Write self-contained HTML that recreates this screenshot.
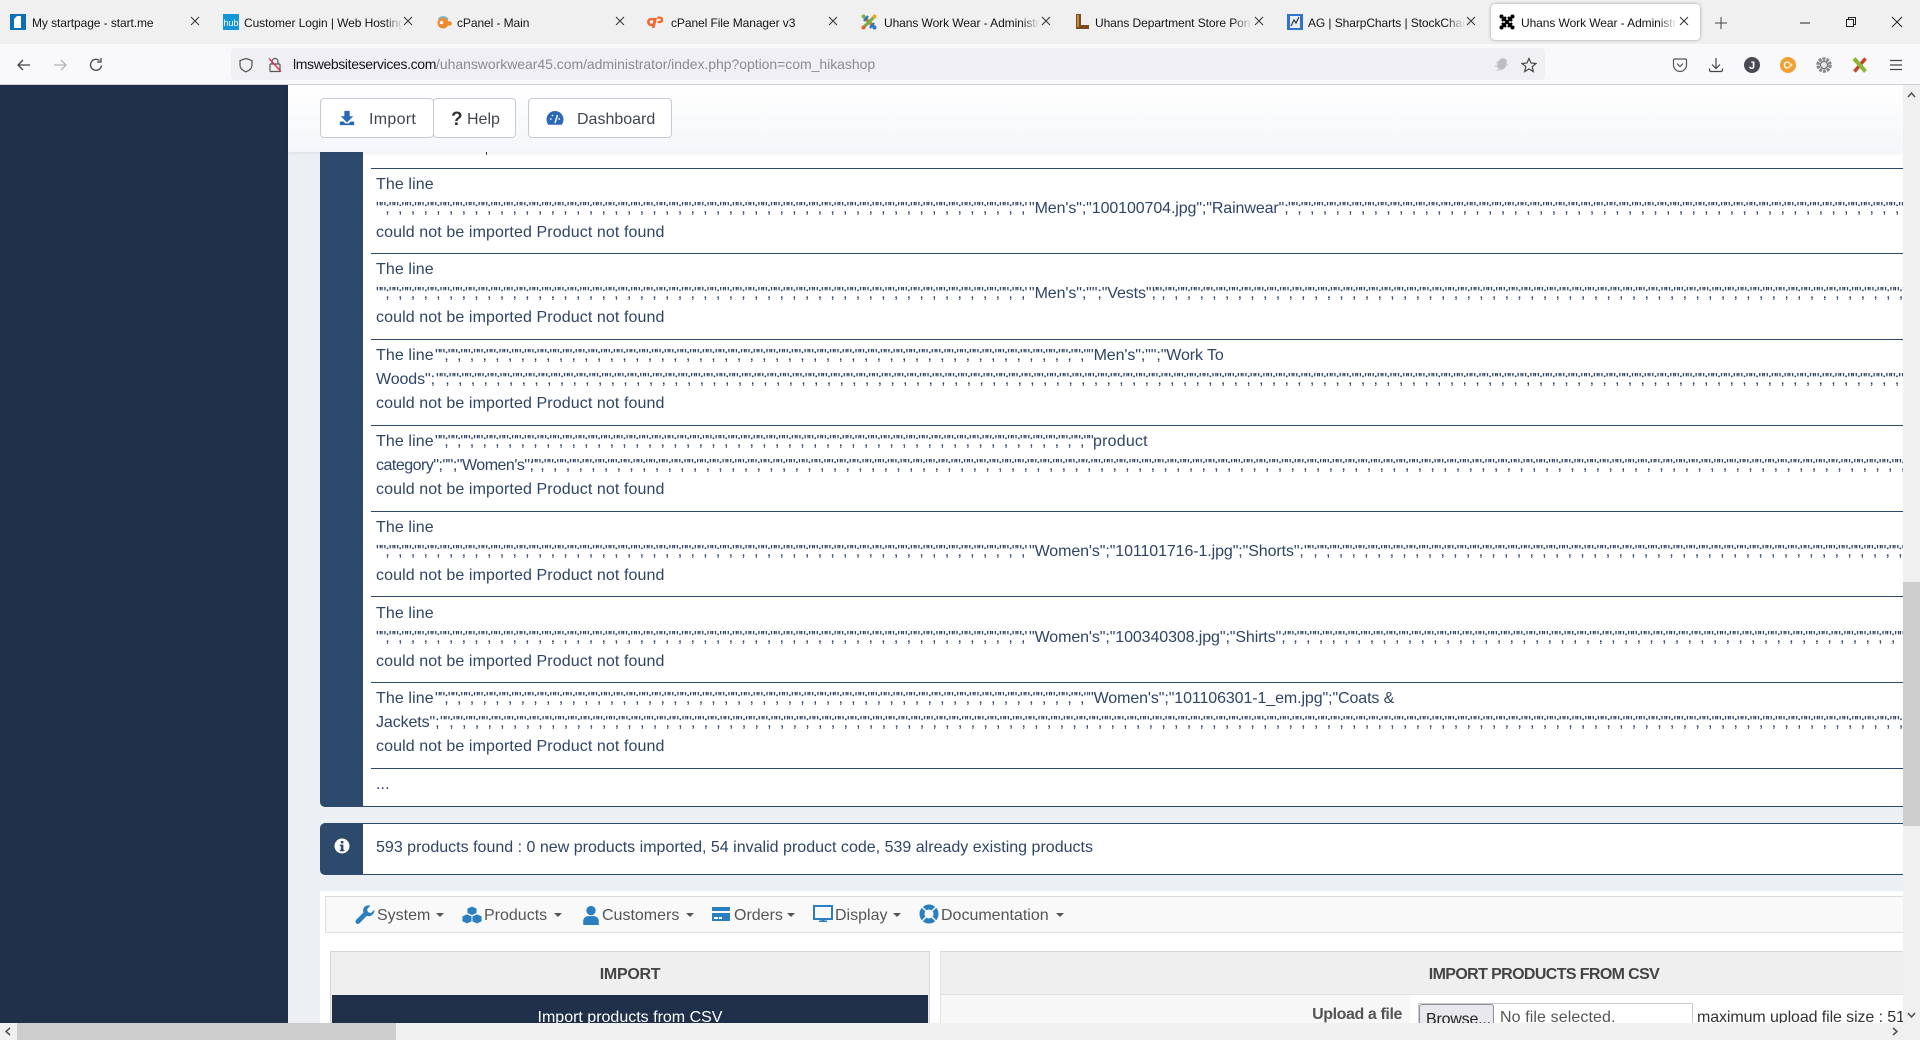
<!DOCTYPE html>
<html lang="en"><head><meta charset="utf-8"><title>Uhans Work Wear - Administration</title>
<style>
html,body{margin:0;padding:0;width:1920px;height:1040px;overflow:hidden;background:#ecf0f4;font-family:"Liberation Sans",sans-serif;}
.a{position:absolute}
#tabs{left:0;top:0;width:1920px;height:44px;background:#f0f0f0}
.tt{position:absolute;top:15px;height:16px;line-height:16px;font-size:12px;color:#15141a;white-space:nowrap;overflow:hidden;letter-spacing:-.08px}
.fd{-webkit-mask-image:linear-gradient(90deg,#000 88%,transparent);mask-image:linear-gradient(90deg,#000 88%,transparent)}
.x{position:absolute;top:15px;width:12px;height:12px}
.fav{position:absolute;top:14px;width:16px;height:16px}
#bar{left:0;top:44px;width:1920px;height:40px;background:#f9f9fb}
#sep{left:0;top:84px;width:1920px;height:1px;background:#cfcfd8}
#addr{left:231px;top:48px;width:1314px;height:32px;background:#f0f0f4;border-radius:4px}
#url{left:293px;top:56px;font-size:14px;line-height:17px;color:#8a8a92;white-space:nowrap;letter-spacing:-.04px}
#url b{font-weight:normal;color:#15141a;letter-spacing:-.36px}
#side{left:0;top:85px;width:288px;height:955px;background:#20304a}
#cont{left:288px;top:85px;width:1615px;height:938px;background:#ecf0f4;overflow:hidden}
#nav{left:320px;top:152px;width:43px;height:655px;background:#2d4a6d;border-radius:0 0 0 5px}
#white{left:363px;top:152px;width:1540px;height:654px;background:#fff;border-bottom:1px solid #2d4a6d}
#head{left:288px;top:85px;width:1615px;height:67px;background:linear-gradient(#fff,#f4f6f9);box-shadow:0 1px 4px rgba(0,0,0,.08)}
.btn{position:absolute;top:98px;height:40px;box-sizing:border-box;border:1px solid #c5cad6;border-radius:4px;background:#fff;font-size:16px;line-height:38px;color:#40464f}
.btn span{position:absolute;top:2px;white-space:nowrap}
.hr{position:absolute;left:371px;width:1532px;height:1px;background:#2d4a6d}
.l{position:absolute;left:376px;width:1527px;height:24px;margin-top:2px;line-height:24px;font-size:16px;color:#2f4565;white-space:nowrap;overflow:hidden;letter-spacing:.1px}
.q{position:absolute;top:0;height:24px;overflow:hidden;letter-spacing:-1.03px}
.t{position:absolute;top:0;letter-spacing:-.1px}
.m{position:absolute;top:905px;font-size:16px;line-height:22px;color:#555;white-space:nowrap}
.car{position:absolute;top:913px;width:0;height:0;border:4px solid transparent;border-top-color:#555;border-bottom:0}
.mi{position:absolute;top:904px;width:20px;height:20px}
#clipb{left:0;top:0;width:1920px;height:1023px;overflow:hidden}
</style></head><body>
<div class="a" id="clipb">
<div class="a" id="side"></div>
<div class="a" id="cont"></div>
<div class="a" id="nav"></div>
<div class="a" id="white"></div>

<div class="hr" style="top:168px"></div>
<div class="hr" style="top:253px"></div>
<div class="hr" style="top:339px"></div>
<div class="hr" style="top:425px"></div>
<div class="hr" style="top:511px"></div>
<div class="hr" style="top:596px"></div>
<div class="hr" style="top:682px"></div>
<div class="hr" style="top:768px"></div>

<!-- row 1 -->
<div class="l" style="top:171px">The line</div>
<div class="l" style="top:195px"><span class="q" style="left:0;width:652px">"";"";"";"";"";"";"";"";"";"";"";"";"";"";"";"";"";"";"";"";"";"";"";"";"";"";"";"";"";"";"";"";"";"";"";"";"";"";"";"";"";"";"";"";"";"";"";"";"";"";"";"";"";"";"";"";</span><span class="t" style="left:653px">"Men's";"100100704.jpg";"Rainwear";</span><span class="q" style="left:912px;width:615px">"";"";"";"";"";"";"";"";"";"";"";"";"";"";"";"";"";"";"";"";"";"";"";"";"";"";"";"";"";"";"";"";"";"";"";"";"";"";"";"";"";"";"";"";"";"";"";"";"";"";"";"";</span></div>
<div class="l" style="top:219px">could not be imported Product not found</div>
<!-- row 2 -->
<div class="l" style="top:256px">The line</div>
<div class="l" style="top:280px"><span class="q" style="left:0;width:652px">"";"";"";"";"";"";"";"";"";"";"";"";"";"";"";"";"";"";"";"";"";"";"";"";"";"";"";"";"";"";"";"";"";"";"";"";"";"";"";"";"";"";"";"";"";"";"";"";"";"";"";"";"";"";"";"";</span><span class="t" style="left:653px">"Men's";"";"Vests";</span><span class="q" style="left:776px;width:751px">"";"";"";"";"";"";"";"";"";"";"";"";"";"";"";"";"";"";"";"";"";"";"";"";"";"";"";"";"";"";"";"";"";"";"";"";"";"";"";"";"";"";"";"";"";"";"";"";"";"";"";"";"";"";"";"";"";"";"";"";"";"";"";</span></div>
<div class="l" style="top:304px">could not be imported Product not found</div>
<!-- row 3 -->
<div class="l" style="top:342px">The line<span class="q" style="left:59px;width:653px">"";"";"";"";"";"";"";"";"";"";"";"";"";"";"";"";"";"";"";"";"";"";"";"";"";"";"";"";"";"";"";"";"";"";"";"";"";"";"";"";"";"";"";"";"";"";"";"";"";"";"";"";"";"";"";"";</span><span class="t" style="left:712px">"Men's";"";"Work To</span></div>
<div class="l" style="top:366px"><span class="t" style="left:0">Woods";</span><span class="q" style="left:60px;width:1467px">"";"";"";"";"";"";"";"";"";"";"";"";"";"";"";"";"";"";"";"";"";"";"";"";"";"";"";"";"";"";"";"";"";"";"";"";"";"";"";"";"";"";"";"";"";"";"";"";"";"";"";"";"";"";"";"";"";"";"";"";"";"";"";"";"";"";"";"";"";"";"";"";"";"";"";"";"";"";"";"";"";"";"";"";"";"";"";"";"";"";"";"";"";"";"";"";"";"";"";"";"";"";"";"";"";"";"";"";"";"";"";"";"";"";"";"";"";"";</span></div>
<div class="l" style="top:390px">could not be imported Product not found</div>
<!-- row 4 -->
<div class="l" style="top:428px">The line<span class="q" style="left:59px;width:658px">"";"";"";"";"";"";"";"";"";"";"";"";"";"";"";"";"";"";"";"";"";"";"";"";"";"";"";"";"";"";"";"";"";"";"";"";"";"";"";"";"";"";"";"";"";"";"";"";"";"";"";"";"";"";"";"";</span><span class="t" style="left:717px;letter-spacing:.2px">product</span></div>
<div class="l" style="top:452px"><span class="t" style="left:0;letter-spacing:-.5px">category";"";"Women's";</span><span class="q" style="left:155px;width:1372px">"";"";"";"";"";"";"";"";"";"";"";"";"";"";"";"";"";"";"";"";"";"";"";"";"";"";"";"";"";"";"";"";"";"";"";"";"";"";"";"";"";"";"";"";"";"";"";"";"";"";"";"";"";"";"";"";"";"";"";"";"";"";"";"";"";"";"";"";"";"";"";"";"";"";"";"";"";"";"";"";"";"";"";"";"";"";"";"";"";"";"";"";"";"";"";"";"";"";"";"";"";"";"";"";"";"";"";"";"";"";</span></div>
<div class="l" style="top:476px">could not be imported Product not found</div>
<!-- row 5 -->
<div class="l" style="top:514px">The line</div>
<div class="l" style="top:538px"><span class="q" style="left:0;width:652px">"";"";"";"";"";"";"";"";"";"";"";"";"";"";"";"";"";"";"";"";"";"";"";"";"";"";"";"";"";"";"";"";"";"";"";"";"";"";"";"";"";"";"";"";"";"";"";"";"";"";"";"";"";"";"";"";</span><span class="t" style="left:653px">"Women's";"101101716-1.jpg";"Shorts";</span><span class="q" style="left:928px;width:599px">"";"";"";"";"";"";"";"";"";"";"";"";"";"";"";"";"";"";"";"";"";"";"";"";"";"";"";"";"";"";"";"";"";"";"";"";"";"";"";"";"";"";"";"";"";"";"";"";"";"";"";</span></div>
<div class="l" style="top:562px">could not be imported Product not found</div>
<!-- row 6 -->
<div class="l" style="top:600px">The line</div>
<div class="l" style="top:624px"><span class="q" style="left:0;width:652px">"";"";"";"";"";"";"";"";"";"";"";"";"";"";"";"";"";"";"";"";"";"";"";"";"";"";"";"";"";"";"";"";"";"";"";"";"";"";"";"";"";"";"";"";"";"";"";"";"";"";"";"";"";"";"";"";</span><span class="t" style="left:653px">"Women's";"100340308.jpg";"Shirts";</span><span class="q" style="left:908px;width:619px">"";"";"";"";"";"";"";"";"";"";"";"";"";"";"";"";"";"";"";"";"";"";"";"";"";"";"";"";"";"";"";"";"";"";"";"";"";"";"";"";"";"";"";"";"";"";"";"";"";"";"";"";</span></div>
<div class="l" style="top:648px">could not be imported Product not found</div>
<!-- row 7 -->
<div class="l" style="top:685px">The line<span class="q" style="left:59px;width:653px">"";"";"";"";"";"";"";"";"";"";"";"";"";"";"";"";"";"";"";"";"";"";"";"";"";"";"";"";"";"";"";"";"";"";"";"";"";"";"";"";"";"";"";"";"";"";"";"";"";"";"";"";"";"";"";"";</span><span class="t" style="left:712px">"Women's";"101106301-1_em.jpg";"Coats &amp;</span></div>
<div class="l" style="top:709px"><span class="t" style="left:0">Jackets";</span><span class="q" style="left:64px;width:1463px">"";"";"";"";"";"";"";"";"";"";"";"";"";"";"";"";"";"";"";"";"";"";"";"";"";"";"";"";"";"";"";"";"";"";"";"";"";"";"";"";"";"";"";"";"";"";"";"";"";"";"";"";"";"";"";"";"";"";"";"";"";"";"";"";"";"";"";"";"";"";"";"";"";"";"";"";"";"";"";"";"";"";"";"";"";"";"";"";"";"";"";"";"";"";"";"";"";"";"";"";"";"";"";"";"";"";"";"";"";"";"";"";"";"";"";"";</span></div>
<div class="l" style="top:733px">could not be imported Product not found</div>
<div class="l" style="top:771px">...</div>

<!-- info alert -->
<div class="a" style="left:320px;top:823px;width:43px;height:52px;background:#2d4a6d;border-radius:5px 0 0 5px"></div>
<div class="a" style="left:363px;top:823px;width:1540px;height:50px;background:#fff;border-top:1px solid #2d4a6d;border-bottom:1px solid #2d4a6d"></div>
<svg class="a" style="left:334px;top:838px" width="16" height="16" viewBox="0 0 16 16"><circle cx="8" cy="8" r="7.5" fill="#fff"/><rect x="6.8" y="3" width="2.6" height="2.4" fill="#2d4a6d"/><path d="M5.8 6.6h3.6v5.2h1v1.4H5.8v-1.4h1V8H5.8z" fill="#2d4a6d"/></svg>
<div class="l" style="top:834px;letter-spacing:.01px">593 products found : 0 new products imported, 54 invalid product code, 539 already existing products</div>

<!-- white section -->
<div class="a" style="left:320px;top:891px;width:1583px;height:132px;background:#fff"></div>
<div class="a" style="left:325px;top:896px;width:1578px;height:37px;box-sizing:border-box;background:#f9f9f9;border:1px solid #ddd;border-right:0"></div>

<svg class="mi" style="left:355px;top:905px" width="18" height="18" viewBox="0 0 18 18"><path d="M17.500 4.200l-3.100 3-2.800-.8-.7-2.700 3-3C11.800-.1 9.500.5 8.300 2c-1.100 1.300-1.300 3-.7 4.700L1.100 13.300c-.9 1-.9 2.200 0 3.100.9.900 2.100.8 3 0l6.500-6.600c1.700.6 3.500.3 4.900-.9 1.500-1.300 2.100-3 2-4.700z" fill="#2a7fc1"/></svg>
<div class="m" style="left:377px">System</div><div class="car" style="left:436px"></div>
<svg class="mi" style="left:462px;top:905px" width="18" height="18" viewBox="0 0 18 18"><g fill="#2a7fc1" stroke="#f9f9f9" stroke-width=".8"><path d="M9 1l4.500 2v4.500L9 9.500 4.500 7.500V3z"/><path d="M4.500 8L9 10v5l-4.500 2L0 15v-5z"/><path d="M13.500 8L18 10v5l-4.500 2L9 15v-5z"/></g></svg>
<div class="m" style="left:484px">Products</div><div class="car" style="left:554px"></div>
<svg class="mi" style="left:581px;top:905px" width="16" height="18" viewBox="0 0 16 18"><circle cx="8" cy="5" r="4.200" fill="#2a7fc1"/><path d="M1 18v-3.500C1 11.500 3.500 10 5 10h6c1.500 0 4 1.500 4 4.500V18z" fill="#2a7fc1"/></svg>
<div class="m" style="left:602px">Customers</div><div class="car" style="left:686px"></div>
<svg class="mi" style="left:711px" viewBox="0 0 20 20"><path d="M1 3h18v4H1zM1 9h18v8H1z" fill="#2a7fc1"/><path d="M3 13h4v2H3zM8 13h3v2H8z" fill="#fff"/></svg>
<div class="m" style="left:734px">Orders</div><div class="car" style="left:787px"></div>
<svg class="mi" style="left:813px" viewBox="0 0 20 20"><path d="M1 2h18v13H1z" fill="none" stroke="#2a7fc1" stroke-width="2"/><path d="M6 18h8v-1.500h-2.500V15h-3v1.500H6z" fill="#2a7fc1"/></svg>
<div class="m" style="left:835px">Display</div><div class="car" style="left:893px"></div>
<svg class="mi" style="left:919px" viewBox="0 0 20 20"><circle cx="10" cy="10" r="7" fill="none" stroke="#2a7fc1" stroke-width="5"/><path d="M3 3l4 4M17 3l-4 4M3 17l4-4M17 17l-4-4" stroke="#fff" stroke-width="1.500"/></svg>
<div class="m" style="left:941px">Documentation</div><div class="car" style="left:1056px"></div>

<!-- import panel -->
<div class="a" style="left:330px;top:951px;width:600px;height:90px;box-sizing:border-box;background:#efefef;border:1px solid #d5d5d5"></div>
<div class="a" style="left:331px;top:962px;width:598px;height:26px;line-height:26px;text-align:center;font-size:16px;font-weight:bold;color:#444;letter-spacing:-.3px">IMPORT</div>
<div class="a" style="left:332px;top:995px;width:596px;height:50px;background:#20304a"></div>
<div class="a" style="left:332px;top:1006px;width:596px;height:24px;line-height:24px;text-align:center;font-size:16px;color:#fff">Import products from CSV</div>

<div class="a" style="left:940px;top:951px;width:963px;height:44px;box-sizing:border-box;background:#efefef;border:1px solid #e2e2e2;border-top-color:#d5d5d5;border-right:0"></div>
<div class="a" style="left:1185px;top:962px;width:718px;height:26px;line-height:26px;text-align:center;font-size:16px;font-weight:bold;color:#444;letter-spacing:-.62px">IMPORT PRODUCTS FROM CSV</div>
<div class="a" style="left:940px;top:995px;width:470px;height:30px;background:#f7f7f7;border-left:1px solid #e2e2e2;box-sizing:border-box"></div>
<div class="a" style="left:1200px;top:1003px;width:202px;height:24px;line-height:24px;text-align:right;font-size:16px;font-weight:bold;color:#555;letter-spacing:-.4px">Upload a file</div>
<div class="a" style="left:1418px;top:1003px;width:275px;height:30px;box-sizing:border-box;background:#fff;border:1px solid #ccc"></div>
<div class="a" style="left:1419px;top:1004px;width:75px;height:30px;box-sizing:border-box;background:#e9e9ed;border:1px solid #8f8f9d;border-radius:3px;font-size:16px;line-height:29px;color:#222;padding-left:6px;letter-spacing:-.2px;white-space:nowrap;overflow:hidden">Browse...</div>
<div class="a" style="left:1500px;top:1006px;font-size:16px;line-height:24px;color:#555;white-space:nowrap;letter-spacing:.1px">No file selected.</div>
<div class="a" style="left:1697px;top:1006px;width:206px;overflow:hidden;font-size:16px;line-height:24px;color:#333;letter-spacing:-.1px;white-space:nowrap">maximum upload file size : 512 MB</div>

<!-- sticky header -->
<div class="a" id="head"></div>
<div class="btn" style="left:320px;width:114px"><svg class="a" style="left:18px;top:11px" width="16" height="16" viewBox="0 0 18 18"><path d="M6 1h6v6h4l-7 7-7-7h4z" fill="#2a69b8"/><path d="M1 13h4l2 2h4l2-2h4v4H1z" fill="#2a69b8"/></svg><span style="left:48px;letter-spacing:.3px">Import</span></div>
<div class="btn" style="left:433px;width:83px"><span style="left:17px;font-weight:bold;font-size:19px;color:#333">?</span><span style="left:33px">Help</span></div>
<div class="btn" style="left:528px;width:144px"><svg class="a" style="left:17px;top:10px" width="18" height="18" viewBox="0 0 18 18"><path d="M9 2a8.500 8.500 0 0 0-8.500 8.500c0 2 .7 3.800 1.800 5.200h13.400c1.100-1.400 1.800-3.200 1.800-5.200A8.500 8.500 0 0 0 9 2z" fill="#2a69b8"/><path d="M9 14l2.500-8M4 10h1.500M12.500 10H14M6 6l1 1" stroke="#fff" stroke-width="1.400"/></svg><span style="left:48px">Dashboard</span></div>
<div class="a" style="left:486px;top:152px;width:1px;height:3px;background:#2f4565"></div>
</div>

<!-- browser chrome -->
<div class="a" id="tabs"></div>
<div class="a" style="left:1491px;top:4px;width:209px;height:36px;background:#fff;border-radius:4px;box-shadow:0 0 3px rgba(0,0,0,.35)"></div>

<svg class="fav" style="left:10px" viewBox="0 0 16 16"><rect width="16" height="16" fill="#0d6fb8"/><path d="M11 2H7L4 5v9h7z" fill="#fff"/></svg>
<div class="tt" style="left:32px;width:135px">My startpage - start.me</div>
<svg class="fav" style="left:223px" viewBox="0 0 16 16"><rect width="16" height="16" fill="#1496d8"/><text x="8" y="12" text-anchor="middle" font-size="9" fill="#fff" font-family="Liberation Sans">hub</text></svg>
<div class="tt fd" style="left:244px;width:159px">Customer Login | Web Hosting</div>
<svg class="fav" style="left:436px" viewBox="0 0 16 16"><circle cx="7" cy="9" r="5.500" fill="#ee8a2c"/><circle cx="13.500" cy="9.500" r="2.300" fill="#ee8a2c"/><circle cx="5.500" cy="8.500" r="1.800" fill="#fff"/><path d="M2.500 5.500a5.500 5.500 0 0 1 9.500 0" fill="none" stroke="#5fb0d8" stroke-width="1.300"/></svg>
<div class="tt" style="left:457px;width:120px">cPanel - Main</div>
<svg class="fav" style="left:647px" viewBox="0 0 16 16"><path d="M7.500 4H4a4 4 0 0 0 0 8h1.800l.8-2.400H4.200a1.600 1.600 0 0 1 0-3.200h2.200L4.900 14h2.600L10 4z" fill="#f5662a"/><path d="M10.500 2.500H13a3.300 3.300 0 0 1 0 6.600h-2.600l.7-2.300H13a1 1 0 0 0 0-2h-3z" fill="#f5662a"/></svg>
<div class="tt" style="left:671px;width:140px">cPanel File Manager v3</div>
<svg class="fav" style="left:861px" viewBox="0 0 16 16"><path d="M3.500 3.500l9 9" stroke="#e8632c" stroke-width="3.200"/><path d="M12.500 3.500l-9 9" stroke="#6db33f" stroke-width="3.200"/><path d="M3 7l4-5M9 14l4-5" stroke="#2e77c5" stroke-width="2.500"/><circle cx="2.500" cy="2.500" r="2" fill="#7ab648"/><circle cx="13.500" cy="2.500" r="2" fill="#f4a21f"/><circle cx="2.500" cy="13.500" r="2" fill="#e8632c"/><circle cx="13.500" cy="13.500" r="2" fill="#2e77c5"/></svg>
<div class="tt fd" style="left:884px;width:156px">Uhans Work Wear - Administrat</div>
<svg class="fav" style="left:1074px" viewBox="0 0 16 16"><path d="M2 0h5v11h8v4H2z" fill="#7a4b1c"/><path d="M4 1v12" stroke="#d6a15a" stroke-width="1.500"/></svg>
<div class="tt fd" style="left:1095px;width:157px">Uhans Department Store Pontiac</div>
<svg class="fav" style="left:1287px" viewBox="0 0 16 16"><rect width="16" height="16" fill="#2f74c9"/><rect x="3" y="2" width="10" height="12" fill="#e8eef6"/><path d="M4 12L7 6l2 3 3-6" fill="none" stroke="#334" stroke-width="1.200"/></svg>
<div class="tt fd" style="left:1308px;width:157px">AG | SharpCharts | StockCharts</div>
<svg class="fav" style="left:1499px" viewBox="0 0 16 16"><path d="M3.500 3.500l9 9M12.500 3.500l-9 9M3 7l4-4M9 3l4 4M3 9l4 4M9 13l4-4" stroke="#000" stroke-width="2.400"/><circle cx="2.500" cy="2.500" r="2" fill="#000"/><circle cx="13.500" cy="2.500" r="2" fill="#000"/><circle cx="2.500" cy="13.500" r="2" fill="#000"/><circle cx="13.500" cy="13.500" r="2" fill="#000"/></svg>
<div class="tt fd" style="left:1521px;width:156px">Uhans Work Wear - Administrat</div>

<svg class="x" style="left:189px" viewBox="0 0 12 12"><path d="M2 2l8 8M10 2l-8 8" stroke="#333" stroke-width="1"/></svg>
<svg class="x" style="left:402px" viewBox="0 0 12 12"><path d="M2 2l8 8M10 2l-8 8" stroke="#333" stroke-width="1"/></svg>
<svg class="x" style="left:614px" viewBox="0 0 12 12"><path d="M2 2l8 8M10 2l-8 8" stroke="#333" stroke-width="1"/></svg>
<svg class="x" style="left:827px" viewBox="0 0 12 12"><path d="M2 2l8 8M10 2l-8 8" stroke="#333" stroke-width="1"/></svg>
<svg class="x" style="left:1040px" viewBox="0 0 12 12"><path d="M2 2l8 8M10 2l-8 8" stroke="#333" stroke-width="1"/></svg>
<svg class="x" style="left:1253px" viewBox="0 0 12 12"><path d="M2 2l8 8M10 2l-8 8" stroke="#333" stroke-width="1"/></svg>
<svg class="x" style="left:1465px" viewBox="0 0 12 12"><path d="M2 2l8 8M10 2l-8 8" stroke="#333" stroke-width="1"/></svg>
<svg class="x" style="left:1678px" viewBox="0 0 12 12"><path d="M2 2l8 8M10 2l-8 8" stroke="#333" stroke-width="1"/></svg>
<svg class="a" style="left:1715px;top:17px" width="12" height="12" viewBox="0 0 12 12"><path d="M6 0v12M0 6h12" stroke="#444" stroke-width="1"/></svg>
<svg class="a" style="left:1799px;top:17px" width="12" height="12" viewBox="0 0 12 12"><path d="M1 6h10" stroke="#222" stroke-width="1"/></svg>
<svg class="a" style="left:1845px;top:16px" width="12" height="12" viewBox="0 0 12 12"><path d="M1.500 3.500h7v7h-7zM3.500 3.500v-2h7v7h-2" fill="none" stroke="#222" stroke-width="1"/></svg>
<svg class="a" style="left:1891px;top:16px" width="12" height="12" viewBox="0 0 12 12"><path d="M1 1l10 10M11 1L1 11" stroke="#222" stroke-width="1"/></svg>

<div class="a" id="bar"></div>
<div class="a" id="sep"></div>
<div class="a" id="addr"></div>
<svg class="a" style="left:16px;top:57px" width="16" height="16" viewBox="0 0 16 16"><path d="M14 8H2.500M7 3L2 8l5 5" fill="none" stroke="#444" stroke-width="1.300"/></svg>
<svg class="a" style="left:52px;top:57px" width="16" height="16" viewBox="0 0 16 16"><path d="M2 8h11.500M9 3l5 5-5 5" fill="none" stroke="#b5b5b8" stroke-width="1.300"/></svg>
<svg class="a" style="left:88px;top:57px" width="16" height="16" viewBox="0 0 16 16"><path d="M13.500 8.500A5.500 5.500 0 1 1 11.500 3.500M13 1v4H9" fill="none" stroke="#444" stroke-width="1.300"/></svg>
<svg class="a" style="left:238px;top:57px" width="16" height="16" viewBox="0 0 16 16"><path d="M8 1.500l6 2v4.500c0 3.500-2.500 5.500-6 6.800C4.500 13.500 2 11.500 2 8V3.500z" fill="none" stroke="#555" stroke-width="1.200"/></svg>
<svg class="a" style="left:267px;top:57px" width="16" height="16" viewBox="0 0 16 16"><rect x="3" y="7" width="10" height="7.500" rx="1" fill="none" stroke="#555" stroke-width="1.200"/><path d="M5 7V4.500a3 3 0 0 1 6 0V7" fill="none" stroke="#555" stroke-width="1.200"/><path d="M2 1.500l12 13" stroke="#e22850" stroke-width="1.300"/></svg>
<div class="a" id="url"><b>lmswebsiteservices.com</b>/uhansworkwear45.com/administrator/index.php?option=com_hikashop</div>
<svg class="a" style="left:1493px;top:56px" width="16" height="18" viewBox="0 0 16 18"><ellipse cx="9" cy="8" rx="4.500" ry="6" fill="#bdbdc1" transform="rotate(25 9 8)"/><path d="M3 6l3 2M2 10l3 0M4 15l3-3M14 4l-2 2M15 9l-3 0" stroke="#c8c8cc" stroke-width="1.300"/></svg>
<svg class="a" style="left:1521px;top:57px" width="16" height="16" viewBox="0 0 16 16"><path d="M8 1.500l2 4.500 4.900.5-3.700 3.200 1.100 4.800L8 12l-4.300 2.500 1.100-4.800L1.100 6.500 6 6z" fill="none" stroke="#444" stroke-width="1.200"/></svg>
<svg class="a" style="left:1672px;top:57px" width="16" height="16" viewBox="0 0 16 16"><path d="M2.500 2h11a1 1 0 0 1 1 1v5a6.500 6.500 0 0 1-13 0V3a1 1 0 0 1 1-1z" fill="none" stroke="#555" stroke-width="1.200"/><path d="M5 6.500l3 3 3-3" fill="none" stroke="#555" stroke-width="1.200"/></svg>
<svg class="a" style="left:1708px;top:57px" width="16" height="16" viewBox="0 0 16 16"><path d="M8 1v10M4 7.500L8 11.500l4-4M1.500 11.500V13a1.500 1.500 0 0 0 1.500 1.500h10a1.500 1.500 0 0 0 1.500-1.500v-1.500" fill="none" stroke="#444" stroke-width="1.200"/></svg>
<svg class="a" style="left:1744px;top:57px" width="16" height="16" viewBox="0 0 16 16"><circle cx="8" cy="8" r="8" fill="#4a4a55"/><text x="8" y="12" text-anchor="middle" font-size="11" font-weight="bold" fill="#fff" font-family="Liberation Sans">J</text></svg>
<svg class="a" style="left:1780px;top:57px" width="16" height="16" viewBox="0 0 16 16"><circle cx="8" cy="8" r="8" fill="#f0a030"/><text x="7" y="11.500" text-anchor="middle" font-size="10" font-weight="bold" fill="#fff" font-family="Liberation Sans">C</text><path d="M11 6.500v3M9.500 8h3" stroke="#fff" stroke-width="1.100"/></svg>
<svg class="a" style="left:1816px;top:57px" width="16" height="16" viewBox="0 0 16 16"><circle cx="8" cy="8" r="6" fill="none" stroke="#888" stroke-width="3.500" stroke-dasharray="2.800 1"/><circle cx="8" cy="8" r="3.500" fill="#e8e8e8" stroke="#666"/></svg>
<svg class="a" style="left:1852px;top:57px" width="16" height="16" viewBox="0 0 16 16"><path d="M13.500 1.500L2.500 14.500" stroke="#c8402a" stroke-width="3.500"/><path d="M2 1.500l11.500 13" stroke="#8ab833" stroke-width="4"/></svg>
<svg class="a" style="left:1888px;top:57px" width="16" height="16" viewBox="0 0 16 16"><path d="M2 3.500h12M2 8h12M2 12.500h12" stroke="#444" stroke-width="1.300"/></svg>

<!-- scrollbars -->
<div class="a" style="left:1903px;top:85px;width:17px;height:955px;background:#f0f0f0"></div>
<div class="a" style="left:1903px;top:582px;width:17px;height:244px;background:#cdcdcd"></div>
<div class="a" style="left:0;top:1023px;width:1903px;height:17px;background:#f0f0f0"></div>
<div class="a" style="left:17px;top:1023px;width:379px;height:17px;background:#cdcdcd"></div>
<svg class="a" style="left:1906px;top:90px" width="11" height="10" viewBox="0 0 11 10"><path d="M2 7l3.500-4L9 7" fill="none" stroke="#505050" stroke-width="1.500"/></svg>
<svg class="a" style="left:1906px;top:1010px" width="11" height="10" viewBox="0 0 11 10"><path d="M2 3l3.500 4L9 3" fill="none" stroke="#505050" stroke-width="1.500"/></svg>
<svg class="a" style="left:3px;top:1026px" width="10" height="11" viewBox="0 0 10 11"><path d="M7 2L3 5.500 7 9" fill="none" stroke="#505050" stroke-width="1.500"/></svg>
<svg class="a" style="left:1890px;top:1026px" width="10" height="11" viewBox="0 0 10 11"><path d="M3 2l4 3.500L3 9" fill="none" stroke="#505050" stroke-width="1.500"/></svg>
</body></html>
